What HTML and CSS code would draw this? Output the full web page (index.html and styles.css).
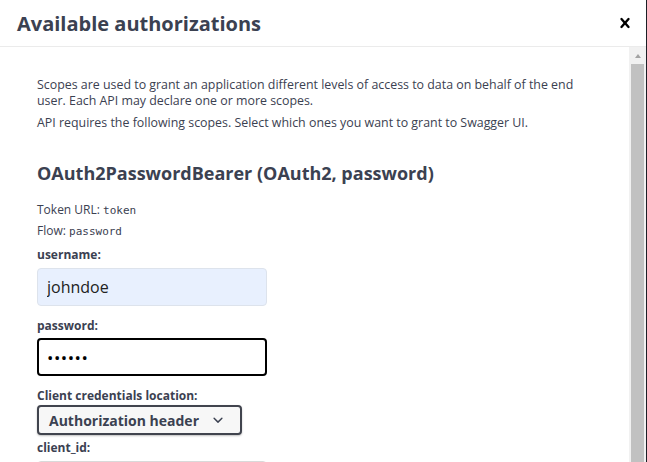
FILE: index.html
```html
<!DOCTYPE html>
<html>
<head>
<meta charset="utf-8">
<link rel="stylesheet" href="styles.css">
</head>
<body>
<div class="modal">
  <div class="modal-header">
    <h3 class="modal-title">Available authorizations</h3>
    <button class="close-btn" aria-label="Close">
      <svg width="20" height="20" viewBox="0 0 20 20"><path d="M14.348 14.849a1.2 1.2 0 0 1-1.697 0L10 11.819l-2.651 3.029a1.2 1.2 0 1 1-1.697-1.697l2.758-3.15-2.759-3.152a1.2 1.2 0 1 1 1.697-1.697L10 8.183l2.651-3.031a1.2 1.2 0 1 1 1.697 1.697l-2.758 3.152 2.758 3.15a1.2 1.2 0 0 1 0 1.698z"/></svg>
    </button>
  </div>
  <div class="modal-body">
    <div class="content">
      <p class="desc">Scopes are used to grant an application different levels of access to data on behalf of the end user. Each API may declare one or more scopes.</p>
      <p class="desc">API requires the following scopes. Select which ones you want to grant to Swagger UI.</p>
      <h4 class="scheme-title">OAuth2PasswordBearer (OAuth2, password)</h4>
      <p class="meta meta-first">Token URL: <code>token</code></p>
      <p class="meta">Flow: <code>password</code></p>
      <label class="field-label label-username">username:</label>
      <input class="field field-autofill" type="text" value="johndoe">
      <label class="field-label label-password">password:</label>
      <input class="field field-focus" type="password" value="secret">
      <label class="field-label label-location">Client credentials location:</label>
      <div class="select">
        <span>Authorization header</span>
        <svg width="20" height="20" viewBox="0 0 20 20"><path d="M13.418 7.859a.695.695 0 0 1 .978 0 .68.68 0 0 1 0 .969l-3.908 3.83a.697.697 0 0 1-.979 0l-3.908-3.83a.68.68 0 0 1 0-.969.695.695 0 0 1 .978 0L10 11l3.418-3.141z"/></svg>
      </div>
      <label class="field-label label-client">client_id:</label>
      <input class="field" type="text" value="">
    </div>
    <div class="scrollbar">
      <div class="scroll-arrow"></div>
      <div class="scroll-thumb"></div>
    </div>
  </div>
</div>
</body>
</html>
```
FILE: styles.css
```css
html, body {
  margin: 0;
  padding: 0;
  height: 100%;
}
body {
  background: #1c1f26;
  font-family: "Open Sans", "Noto Sans", sans-serif;
  color: #3b4151;
  overflow: hidden;
}
.modal {
  width: 646px;
  height: 462px;
  background: #fff;
  display: flex;
  flex-direction: column;
  overflow: hidden;
}
.modal-header {
  height: 46px;
  flex: none;
  display: flex;
  align-items: center;
  justify-content: space-between;
  padding: 0 11px 0 17px;
  border-bottom: 1px solid #ebebeb;
}
.modal-title {
  margin: 0;
  font-size: 20px;
  font-weight: 700;
  color: #3b4151;
}
.close-btn {
  border: none;
  background: none;
  padding: 0;
  width: 20px;
  height: 20px;
  cursor: pointer;
  display: block;
}
.close-btn svg {
  display: block;
  fill: #000;
}
.modal-body {
  flex: 1;
  display: flex;
  min-height: 0;
}
.content {
  flex: 1;
  padding: 30px 31px 0 37px;
  overflow: hidden;
}
.desc {
  margin: 0 0 6px;
  font-size: 12.4px;
  line-height: 16px;
}
.scheme-title {
  margin: 30px 0 0;
  font-size: 18px;
  line-height: 24px;
  font-weight: 700;
}
.meta {
  margin: 4px 0 0;
  font-size: 12px;
  line-height: 16px;
}
.meta-first {
  margin-top: 17px;
}
code {
  font-family: "DejaVu Sans Mono", "Liberation Mono", monospace;
  font-size: 11px;
}
.field-label {
  display: block;
  font-size: 12px;
  line-height: 16px;
  font-weight: 700;
}
.label-username { margin-top: 7px; }
.label-password { margin-top: 12px; }
.label-location { margin-top: 12px; }
.label-client { margin-top: 5px; }
.field {
  display: block;
  box-sizing: border-box;
  width: 230px;
  height: 38px;
  margin: 5px 0 0;
  padding: 0 9px;
  border: 1px solid #d9d9d9;
  border-radius: 4px;
  background: #fff;
  font-family: "Open Sans", "Noto Sans", sans-serif;
  font-size: 16px;
  color: #3b4151;
  outline: none;
}
.field-autofill {
  background: #e8f0fe;
  border-color: #dde3ec;
  color: #222;
}
.field-focus {
  margin-top: 4px;
  border: 2px solid #000;
  padding: 0 8px;
  color: #000;
  font-size: 17px;
  letter-spacing: 0.5px;
}
.select {
  box-sizing: border-box;
  width: 205px;
  height: 30px;
  margin-top: 1px;
  display: flex;
  align-items: center;
  justify-content: space-between;
  padding: 0 12px 0 10px;
  background: #f7f7f7;
  border: 2px solid #41444e;
  border-radius: 4px;
  box-shadow: 0 1px 2px 0 rgba(0, 0, 0, 0.25);
  font-size: 14px;
  font-weight: 700;
}
.select svg {
  fill: #3b4151;
  display: block;
}
.scrollbar {
  width: 17px;
  flex: none;
  background: #f1f1f1;
  display: flex;
  flex-direction: column;
  align-items: center;
}
.scroll-arrow {
  height: 17px;
  width: 100%;
  display: flex;
  align-items: center;
  justify-content: center;
}
.scroll-arrow::before {
  content: "";
  border-left: 3.5px solid transparent;
  border-right: 3.5px solid transparent;
  border-bottom: 4px solid #a3a3a3;
}
.scroll-thumb {
  flex: 1;
  width: 13px;
  background: #c1c1c1;
}
```
